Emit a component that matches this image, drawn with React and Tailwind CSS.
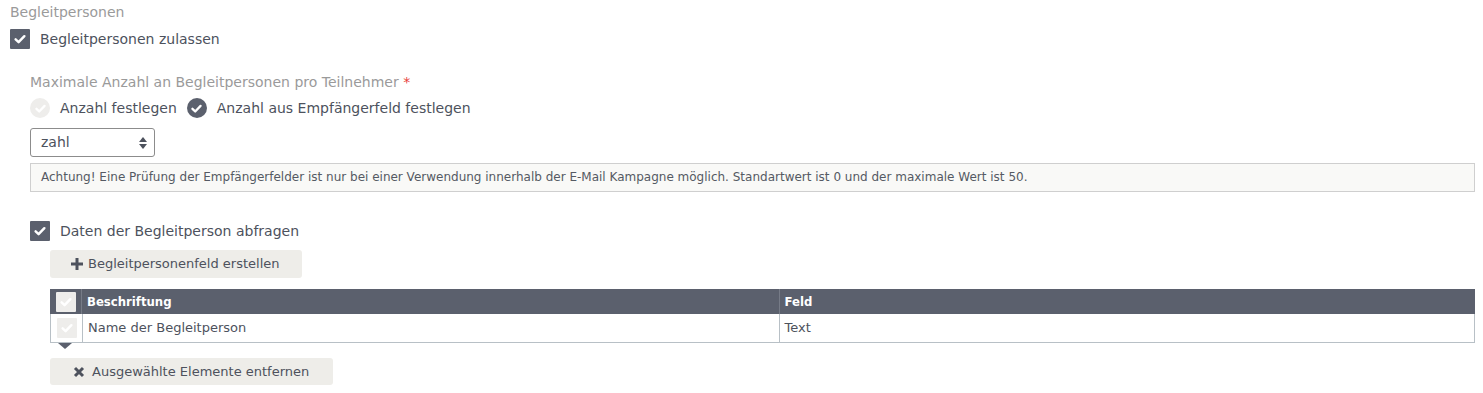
import React from "react";

const font = { fontFamily: '"DejaVu Sans", Verdana, sans-serif' };
const condensed = { fontFamily: '"DejaVu Sans Condensed", "DejaVu Sans", sans-serif' };

function Check({ className = "" }) {
  return (
    <svg viewBox="0 0 16 16" className={className} fill="none">
      <path
        d="M3 8.4 L6.4 11.6 L13 4.8"
        stroke="currentColor"
        strokeWidth="2.8"
        strokeLinecap="round"
        strokeLinejoin="round"
      />
    </svg>
  );
}

function Checkbox({ on = true }) {
  return (
    <span
      className={`flex h-5 w-5 shrink-0 items-center justify-center rounded-[1px] ${
        on ? "bg-[#5b606d] text-white" : "bg-[#eeedeb] text-white"
      }`}
    >
      <Check className="h-[14px] w-[14px]" />
    </span>
  );
}

function Radio({ on }) {
  return (
    <span
      className={`flex h-5 w-5 shrink-0 items-center justify-center rounded-full ${
        on ? "bg-[#5b606d]" : "bg-[#eeedeb]"
      } text-white`}
    >
      <Check className="h-[13px] w-[13px]" />
    </span>
  );
}

export default function App() {
  return (
    <div className="bg-white text-[14px] text-[#4d525d] pl-[10px] pr-[8px] pt-[2px] h-[393px]" style={font}>
      <div className="leading-5 text-[#9a9a9a]">Begleitpersonen</div>

      <div className="mt-[7px] flex items-center gap-[10px] h-5">
        <Checkbox />
        <span>Begleitpersonen zulassen</span>
      </div>

      <div className="pl-5">
        <div className="mt-[23px] leading-5 text-[#9a9a9a]">
          Maximale Anzahl an Begleitpersonen pro Teilnehmer{" "}
          <span className="text-[#e8413c]">*</span>
        </div>

        <div className="mt-[6px] flex items-center h-5">
          <Radio on={false} />
          <span className="ml-[10px]">Anzahl festlegen</span>
          <span className="ml-[10px]">
            <Radio on />
          </span>
          <span className="ml-[10px]">Anzahl aus Empfängerfeld festlegen</span>
        </div>

        <div className="mt-[10px] flex h-[29px] w-[125px] items-center justify-between rounded-[3px] border border-[#8c8c8c] pl-[10px] pr-[6px]">
          <span>zahl</span>
          <svg viewBox="0 0 10 14" className="h-[14px] w-[10px]" fill="#4d525d">
            <path d="M5 1 L9 6 L1 6 Z" />
            <path d="M5 13 L9 8 L1 8 Z" />
          </svg>
        </div>

        <div className="mt-[6px] border border-[#cfcfcf] bg-[#f9f9f7] px-[10px] py-[5px] text-[12px] leading-[17px] text-[#555a63]">
          Achtung! Eine Prüfung der Empfängerfelder ist nur bei einer Verwendung innerhalb der E-Mail Kampagne möglich. Standartwert ist 0 und der maximale Wert ist 50.
        </div>

        <div className="mt-[29px] flex items-center gap-[10px] h-5">
          <Checkbox />
          <span>Daten der Begleitperson abfragen</span>
        </div>

        <div className="pl-5">
          <button className="mt-[9px] flex h-[28px] items-center gap-[5px] rounded-[3px] bg-[#eeede9] pl-[21px] pr-[22px] text-[13px] text-[#4d525d]">
            <svg viewBox="0 0 12 12" className="h-[12px] w-[12px]" fill="#4d525d">
              <path d="M4.5 0 H7.5 V4.5 H12 V7.5 H7.5 V12 H4.5 V7.5 H0 V4.5 H4.5 Z" />
            </svg>
            Begleitpersonenfeld erstellen
          </button>

          <div className="mt-[11px] text-[13px]">
            <div className="grid h-[25px] grid-cols-[32px_1fr_1fr] bg-[#5b606d] font-bold text-white" style={condensed}>
              <div className="flex items-center justify-center border-r border-[#767b87]">
                <Checkbox on={false} />
              </div>
              <div className="flex items-center pl-[5px]">Beschriftung</div>
              <div className="flex items-center border-l border-[#767b87] pl-[5px]">Feld</div>
            </div>
            <div className="grid h-[29px] grid-cols-[32px_1fr_1fr] border border-t-0 border-[#b8c0c6] text-[#4d525d]">
              <div className="flex items-center justify-center border-r border-[#b8c0c6]">
                <Checkbox on={false} />
              </div>
              <div className="flex items-center pl-[5px]">Name der Begleitperson</div>
              <div className="flex items-center border-l border-[#b8c0c6] pl-[5px]">Text</div>
            </div>
            <div className="ml-[8px] h-0 w-0 border-x-[7px] border-t-[6px] border-x-transparent border-t-[#5b606d]" />
          </div>

          <button className="mt-[9px] flex h-[27px] items-center gap-[7px] rounded-[3px] bg-[#eeede9] pl-[23px] pr-[24px] text-[13px] text-[#4d525d]">
            <svg viewBox="0 0 12 12" className="h-[12px] w-[12px]" fill="none" stroke="#4d525d" strokeWidth="3">
              <path d="M2 2 L10 10 M10 2 L2 10" />
            </svg>
            Ausgewählte Elemente entfernen
          </button>
        </div>
      </div>
    </div>
  );
}
